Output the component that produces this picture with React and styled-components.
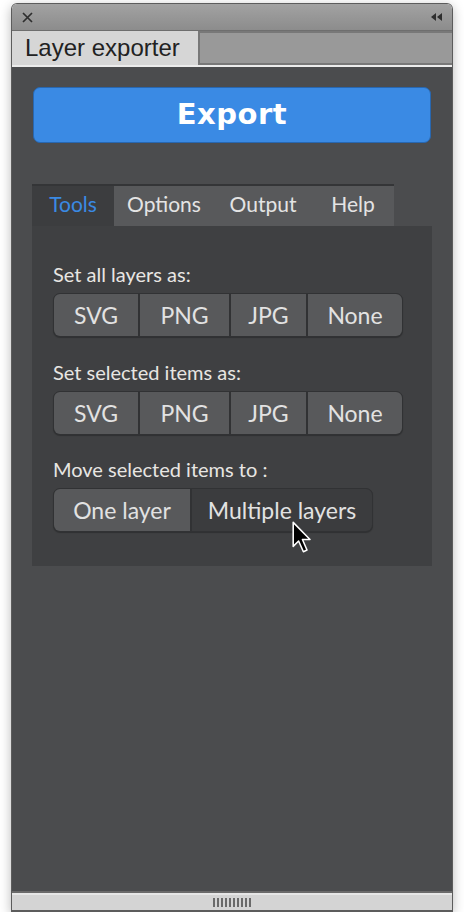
import * as React from "react"
import styled, { createGlobalStyle } from 'styled-components';

const GlobalStyle = createGlobalStyle`
  html, body {
    margin: 0;
    background: #ffffff;
  }
`;

const uiFont = `Lato, "Open Sans", "DejaVu Sans", sans-serif`;

const Window = styled.div`
  margin: 3px 11px 0;
  width: 442px;
  height: 909px;
  box-sizing: border-box;
  display: flex;
  flex-direction: column;
  border: 1px solid #5c5c5c;
  border-bottom-width: 2px;
  border-radius: 6px 6px 0 0;
  box-shadow: 0 3px 12px rgba(0, 0, 0, 0.28);
  overflow: hidden;
`;

const TitleBar = styled.div`
  height: 26px;
  flex: none;
  display: flex;
  align-items: center;
  justify-content: space-between;
  padding: 0 9px 0 10px;
  background: linear-gradient(#a2a2a2, #8c8c8c);
  border-bottom: 1px solid #6e6e6e;
`;

const TabRow = styled.div`
  height: 34px;
  flex: none;
  display: flex;
  background: #d8d8d8;
  border-bottom: 2px solid #ececec;
`;

const DocTab = styled.div`
  width: 186px;
  display: flex;
  align-items: center;
  padding-left: 13px;
  box-sizing: border-box;
  background: #d6d6d6;
  color: #222;
  font-family: "Liberation Sans", Arial, sans-serif;
  font-size: 24px;
`;

const TabFiller = styled.div`
  flex: 1;
  background: #999999;
  border: 2px solid #787878;
  border-right: none;
`;

const Content = styled.div`
  flex: 1;
  display: flex;
  flex-direction: column;
  padding: 20px 20px 0 20px;
  background: #4b4c4e;
  border-bottom: 2px solid #6a6a6a;
`;

const ExportButton = styled.button`
  margin: 0 1px;
  height: 56px;
  box-sizing: border-box;
  border: 1px solid #2867b0;
  border-radius: 7px;
  background: #3a8ae4;
  color: #fff;
  font-family: "DejaVu Sans", Verdana, sans-serif;
  font-weight: 700;
  font-size: 29px;
  letter-spacing: 0.5px;
  padding-bottom: 4px;
  cursor: pointer;
`;

const Panel = styled.div`
  margin-top: 41px;
  width: 400px;
`;

const TabStrip = styled.div`
  display: flex;
  width: 362px;
  height: 42px;
  box-sizing: border-box;
  border-top: 2px solid #343537;
  background: #58595b;
`;

const PanelTab = styled.div`
  width: ${p => p.w}px;
  display: flex;
  align-items: center;
  justify-content: center;
  padding-bottom: 5px;
  font-family: ${uiFont};
  font-size: 21px;
  background: ${p => (p.active ? '#3c3d3f' : '#58595b')};
  color: ${p => (p.active ? '#3a8ae4' : '#e4e4e4')};
`;

const PanelBody = styled.div`
  height: 340px;
  box-sizing: border-box;
  padding: 37px 21px 0;
  background: #3f4042;
`;

const Label = styled.div`
  font-family: ${uiFont};
  font-size: 20px;
  color: #e8e6e2;
  line-height: 22px;
  margin-bottom: 8px;
`;

const SegGroup = styled.div`
  position: relative;
  display: flex;
  gap: 2px;
  width: fit-content;
  margin-bottom: ${p => p.mb || 0}px;
  background: #313234;
  border-radius: 7px;
  border: 1px solid #313234;
  box-shadow: 0 1px 1px rgba(0, 0, 0, 0.25);
`;

const Segment = styled.div`
  width: ${p => p.w}px;
  height: 42px;
  display: flex;
  align-items: center;
  justify-content: center;
  font-family: ${uiFont};
  font-size: 23px;
  color: #e2e2e2;
  background: ${p => (p.dark ? '#3b3c3e' : '#58595b')};
  &:first-child {
    border-radius: 6px 0 0 6px;
  }
  &:last-of-type {
    border-radius: 0 6px 6px 0;
  }
`;

const Cursor = styled.svg`
  position: absolute;
  left: 238px;
  top: 32px;
`;

const BottomBar = styled.div`
  height: 15px;
  flex: none;
  display: flex;
  align-items: center;
  justify-content: center;
  gap: 2px;
  background: #d4d4d4;
  border-top: 2px solid #e6e6e6;
`;

const Grip = styled.span`
  width: 2px;
  height: 9px;
  background: #6a6a6a;
`;

const formats = [
  { name: 'SVG', w: 84 },
  { name: 'PNG', w: 89 },
  { name: 'JPG', w: 75 },
  { name: 'None', w: 94 },
];

const App = () => {
  return (
    <>
      <GlobalStyle />
      <Window>
        <TitleBar>
          <svg width="11" height="11" viewBox="0 0 11 11">
            <path d="M1 1 L10 10 M10 1 L1 10" stroke="#2e2e2e" strokeWidth="1.7" />
          </svg>
          <svg width="12" height="8" viewBox="0 0 12 8">
            <path d="M5 0 L0 4 L5 8 Z M11 0 L6 4 L11 8 Z" fill="#2e2e2e" />
          </svg>
        </TitleBar>
        <TabRow>
          <DocTab>Layer exporter</DocTab>
          <TabFiller />
        </TabRow>
        <Content>
          <ExportButton>Export</ExportButton>
          <Panel>
            <TabStrip>
              <PanelTab w={82} active>Tools</PanelTab>
              <PanelTab w={100}>Options</PanelTab>
              <PanelTab w={98}>Output</PanelTab>
              <PanelTab w={82}>Help</PanelTab>
            </TabStrip>
            <PanelBody>
              <Label>Set all layers as:</Label>
              <SegGroup mb={24}>
                {formats.map(f => <Segment key={f.name} w={f.w}>{f.name}</Segment>)}
              </SegGroup>
              <Label>Set selected items as:</Label>
              <SegGroup mb={23}>
                {formats.map(f => <Segment key={f.name} w={f.w}>{f.name}</Segment>)}
              </SegGroup>
              <Label>Move selected items to :</Label>
              <SegGroup>
                <Segment w={136}>One layer</Segment>
                <Segment w={180} dark>Multiple layers</Segment>
                <Cursor width="24" height="34" viewBox="0 0 20 28">
                  <path d="M1 1 L1 21 L5.5 16.5 L9.5 25.5 L12.5 24 L8.7 15.2 L15 15.2 Z" fill="#000" stroke="#fff" strokeWidth="1.3" strokeLinejoin="round" />
                </Cursor>
              </SegGroup>
            </PanelBody>
          </Panel>
        </Content>
        <BottomBar>
          {Array.from({ length: 10 }).map((_, i) => <Grip key={i} />)}
        </BottomBar>
      </Window>
    </>
  )
}

export default App
